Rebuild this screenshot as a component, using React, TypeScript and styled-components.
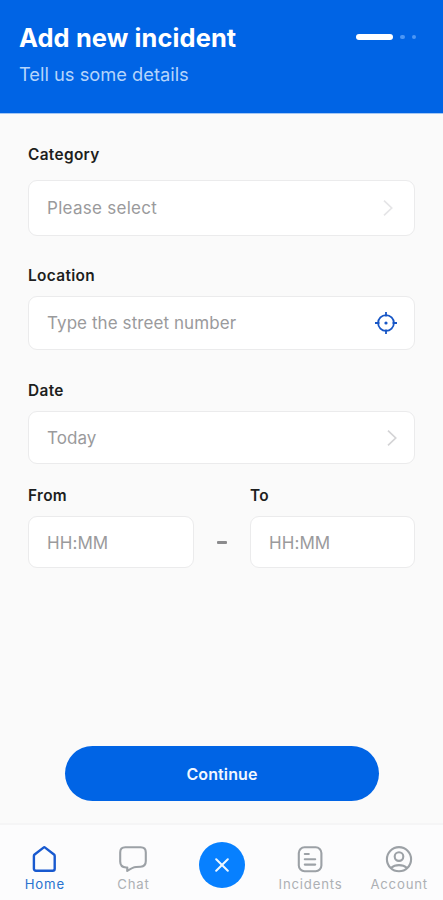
import React from "react";
import styled, { createGlobalStyle } from "styled-components";

const GlobalStyle = createGlobalStyle`
  *, *::before, *::after { box-sizing: border-box; }
  body { margin: 0; background: #fafafa; font-family: Inter, "Liberation Sans", sans-serif; }
  svg { display: block; flex: none; }
  button, input { font-family: inherit; margin: 0; }
`;

const Screen = styled.div`
  width: 443px;
  height: 900px;
  display: flex;
  flex-direction: column;
  overflow: hidden;
  background: #fafafa;
`;

const Header = styled.header`
  height: 114px;
  flex: none;
  display: flex;
  justify-content: space-between;
  padding: 22px 27px 0 19px;
  background: #0064e5;
  border-bottom: 1px solid #a4c7f4;
`;

const Title = styled.h1`
  margin: 0;
  font-size: 25.4px;
  line-height: 32px;
  font-weight: 700;
  letter-spacing: 0.12px;
  color: #fff;
`;

const Subtitle = styled.p`
  margin: 9px 0 0;
  font-size: 18.3px;
  line-height: 23px;
  letter-spacing: 0;
  color: #b5d4fb;
`;

const Steps = styled.div`
  height: 6px;
  margin-top: 12px;
  display: flex;
  align-items: center;
  gap: 7px;
`;

const Step = styled.span<{ $active?: boolean }>`
  width: ${(p) => (p.$active ? 37 : 4.5)}px;
  height: ${(p) => (p.$active ? 6 : 4.5)}px;
  border-radius: 3px;
  background: ${(p) => (p.$active ? "#fff" : "#4c97f5")};
`;

const Form = styled.main`
  flex: 1;
  display: flex;
  flex-direction: column;
  padding: 31px 28px 0;
`;

const Field = styled.div<{ $gap?: number; $after?: number }>`
  display: flex;
  flex-direction: column;
  gap: ${(p) => p.$gap ?? 10}px;
  margin-bottom: ${(p) => p.$after ?? 0}px;
`;

const Label = styled.label`
  font-size: 15.4px;
  line-height: 20px;
  font-weight: 600;
  letter-spacing: 0.34px;
  color: #1d1e20;
`;

const Control = styled.div<{ $height: number; $end?: number; $top?: number }>`
  height: ${(p) => p.$height}px;
  display: flex;
  align-items: center;
  justify-content: space-between;
  padding: ${(p) => p.$top ?? 0}px ${(p) => p.$end ?? 17}px 0 18px;
  border: 1px solid #ebebec;
  border-radius: 9px;
  background: #fff;
`;

const Placeholder = styled.span<{ $spacing?: number }>`
  font-size: 17px;
  line-height: 22px;
  letter-spacing: ${(p) => p.$spacing ?? 0.08}px;
  color: #9a9a9c;
  white-space: nowrap;
`;

const TimeRow = styled.div`
  display: grid;
  grid-template-columns: 166px 56px 165px;
  align-items: end;
`;

const Dash = styled.span`
  width: 10px;
  height: 3px;
  margin: 0 auto 24px;
  border-radius: 1px;
  background: #8b8b8d;
`;

const ContinueButton = styled.button`
  width: 314px;
  height: 55px;
  margin: auto auto 22px;
  padding: 0 0 0 1px;
  border: 0;
  border-radius: 28px;
  background: #0064e5;
  color: #f1f7ff;
  font-size: 16px;
  font-weight: 600;
  letter-spacing: 0.1px;
`;

const Nav = styled.nav`
  height: 77px;
  flex: none;
  display: grid;
  grid-template-columns: repeat(5, 88.6px);
  border-top: 2px solid #f5f5f6;
  background: #fcfcfd;
`;

const NavItem = styled.a<{ $active?: boolean }>`
  display: flex;
  flex-direction: column;
  align-items: center;
  padding-top: 20px;
  color: ${(p) => (p.$active ? "#1859cf" : "#9ca1a6")};
`;

const NavLabel = styled.span<{ $active?: boolean }>`
  margin-top: 3px;
  padding-left: 1px;
  font-size: 13.2px;
  line-height: 16px;
  letter-spacing: 0.8px;
  color: ${(p) => (p.$active ? "#2873cf" : "#adb0b4")};
`;

const CloseButton = styled.button`
  width: 46px;
  height: 46px;
  margin: 17px 0 0 22px;
  padding: 0;
  display: grid;
  place-items: center;
  border: 0;
  border-radius: 50%;
  background: #0780ff;
`;

const Chevron = ({ color }: { color: string }) => (
  <svg width="10" height="16" viewBox="0 0 10 16" fill="none" stroke={color} strokeWidth="1.7">
    <path d="M1 0.7 8.7 8 1 15.3" />
  </svg>
);

const Locate = () => (
  <svg width="22" height="22" viewBox="0 0 22 22" fill="none" stroke="#1756c6" strokeWidth="1.8">
    <circle cx="11" cy="11" r="7.9" />
    <path d="M11 0v4.5M11 17.5V22M0 11h4.5M17.5 11H22" />
    <circle cx="11" cy="11" r="1.6" fill="#1756c6" stroke="none" />
  </svg>
);

const iconProps = {
  width: 28,
  height: 28,
  viewBox: "0 0 28 28",
  fill: "none",
  stroke: "currentColor",
  strokeWidth: 2.1,
  strokeLinecap: "round",
  strokeLinejoin: "round",
} as const;

const HomeIcon = () => (
  <svg {...iconProps} strokeWidth={2.4}>
    <path d="M3.9 10.9q0-.8.7-1.4L13.5 2.6q.8-.6 1.6 0L24 9.5q.7.6.7 1.4v12.9a2 2 0 0 1-2 2H5.9a2 2 0 0 1-2-2z" />
  </svg>
);

const ChatIcon = () => (
  <svg {...iconProps}>
    <path d="M6.4 2.3h15.2c3.7 0 5.2 1.7 5.2 5.2v8.6c0 3.7-1.6 5.5-5.2 5.7l-4.5.2c-3.1.2-5.8 1.8-8.9 3.9l.1-3.4-1.2 0C3.3 22.3 1.2 20 1.2 16.5v-9c0-3.5 1.6-5.2 5.2-5.2z" />
  </svg>
);

const IncidentsIcon = () => (
  <svg {...iconProps}>
    <rect x="2.8" y="2.3" width="22.6" height="24" rx="5.8" />
    <path d="M8.8 9h4M8.8 14.3h10.4M8.8 19.6h10.4" />
  </svg>
);

const AccountIcon = () => (
  <svg {...iconProps}>
    <circle cx="14" cy="14.2" r="12.1" />
    <circle cx="14" cy="11.6" r="4.3" />
    <path d="M6.2 22.8c4-3.6 11.6-3.6 15.6 0" />
  </svg>
);

const CloseIcon = () => (
  <svg width="14" height="14" viewBox="0 0 14 14" stroke="#eef7ff" strokeWidth="2" strokeLinecap="round">
    <path d="M1.2 1.2 12.8 12.8M12.8 1.2 1.2 12.8" />
  </svg>
);

export default function App() {
  return (
    <Screen>
      <GlobalStyle />
      <Header>
        <div>
          <Title>Add new incident</Title>
          <Subtitle>Tell us some details</Subtitle>
        </div>
        <Steps>
          <Step $active />
          <Step />
          <Step />
        </Steps>
      </Header>
      <Form>
        <Field $gap={15} $after={30}>
          <Label>Category</Label>
          <Control $height={56} $end={21}>
            <Placeholder $spacing={0.28}>Please select</Placeholder>
            <Chevron color="#e5e5e7" />
          </Control>
        </Field>
        <Field $after={31}>
          <Label>Location</Label>
          <Control $height={54}>
            <Placeholder>Type the street number</Placeholder>
            <Locate />
          </Control>
        </Field>
        <Field $after={22}>
          <Label>Date</Label>
          <Control $height={53}>
            <Placeholder>Today</Placeholder>
            <Chevron color="#d4d4d6" />
          </Control>
        </Field>
        <TimeRow>
          <Field>
            <Label>From</Label>
            <Control $height={52} $top={2}>
              <Placeholder>HH:MM</Placeholder>
            </Control>
          </Field>
          <Dash />
          <Field>
            <Label>To</Label>
            <Control $height={52} $top={2}>
              <Placeholder>HH:MM</Placeholder>
            </Control>
          </Field>
        </TimeRow>
        <ContinueButton>Continue</ContinueButton>
      </Form>
      <Nav>
        <NavItem $active>
          <HomeIcon />
          <NavLabel $active>Home</NavLabel>
        </NavItem>
        <NavItem>
          <ChatIcon />
          <NavLabel>Chat</NavLabel>
        </NavItem>
        <CloseButton aria-label="Close">
          <CloseIcon />
        </CloseButton>
        <NavItem>
          <IncidentsIcon />
          <NavLabel>Incidents</NavLabel>
        </NavItem>
        <NavItem>
          <AccountIcon />
          <NavLabel>Account</NavLabel>
        </NavItem>
      </Nav>
    </Screen>
  );
}
